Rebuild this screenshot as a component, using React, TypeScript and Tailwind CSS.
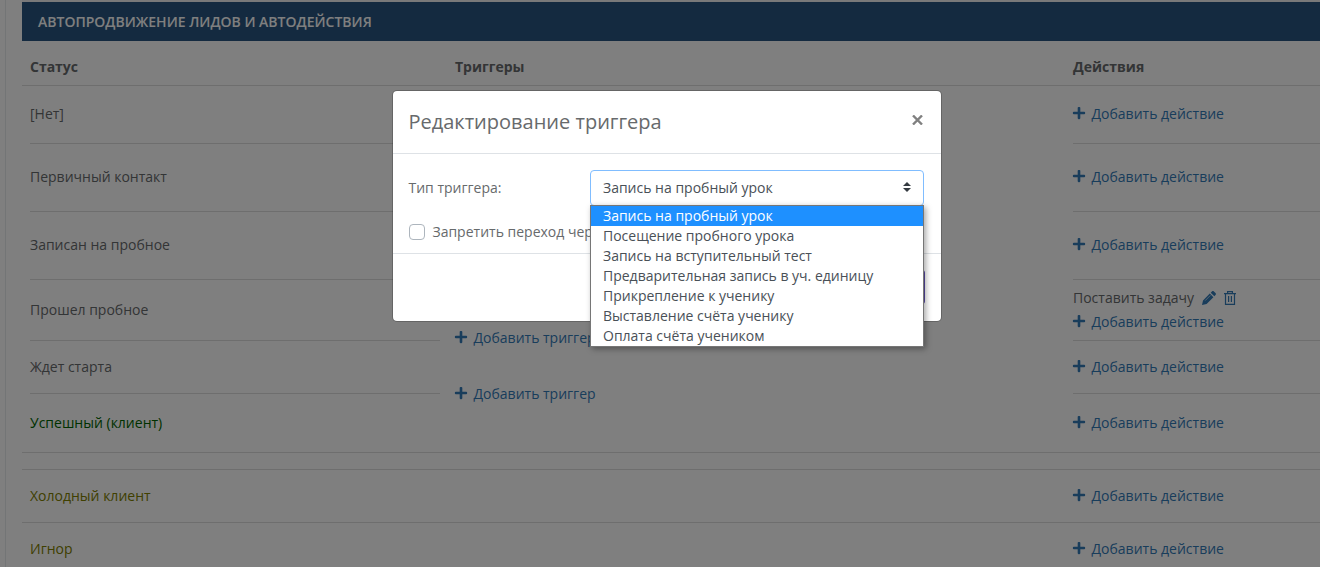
import { FaPlus } from 'react-icons/fa'

const options = [
  'Запись на пробный урок',
  'Посещение пробного урока',
  'Запись на вступительный тест',
  'Предварительная запись в уч. единицу',
  'Прикрепление к ученику',
  'Выставление счёта ученику',
  'Оплата счёта учеником',
]

const stages = [
  { name: '[Нет]', height: 'h-[58px] pb-[2px]', color: 'text-[#676a6c]' },
  { name: 'Первичный контакт', height: 'h-[68px] pb-[2px]', color: 'text-[#676a6c]' },
  { name: 'Записан на пробное', height: 'h-[68px] pb-[2px]', color: 'text-[#676a6c]' },
  { name: 'Прошел пробное', height: 'h-[61px]', color: 'text-[#676a6c]', task: 'Поставить задачу' },
  { name: 'Ждет старта', height: 'h-[53px]', color: 'text-[#676a6c]' },
  { name: 'Успешный (клиент)', height: 'h-[58px]', color: 'text-[#006400]' },
]

const otherStages = [
  { name: 'Холодный клиент', color: 'text-[#808000]' },
  { name: 'Игнор', color: 'text-[#808000]' },
]

function AddLink({ label }: { label: string }) {
  return (
    <a className="flex h-6 items-center whitespace-nowrap text-[#337ab7]">
      <FaPlus className="mr-[5.5px] -ml-px size-[14px] -translate-y-px" />
      {label}
    </a>
  )
}

function PencilIcon() {
  return (
    <svg viewBox="0 0 14 14" className="size-[14px]" fill="currentColor">
      <path d="M0 14 1 9.4 7.8 2.6l3.6 3.6L4.6 13zM8.7 1.7 9.9.5c.6-.6 1.4-.6 2 0l1.6 1.6c.6.6.6 1.4 0 2l-1.2 1.2z" />
      <path d="m3.2 9.6 5.2-5.2" stroke="#fff" strokeWidth=".6" />
    </svg>
  )
}

function TrashIcon() {
  return (
    <svg viewBox="0 0 12 14" className="h-[14px] w-3" fill="none" stroke="currentColor" strokeWidth="1.2">
      <path d="M0 2.6h12M3.6 2.4V.7h4.8v1.7M1.5 2.6v10.7h9V2.6M4.6 5v6M7.4 5v6" />
    </svg>
  )
}

function StageTable() {
  return (
    <div className="ml-[5px] h-full border-l border-[#e7eaec] pl-4">
      <div className="h-[2px] bg-[#f3f3f4]" />
      <h5 className="flex h-[39px] items-center bg-[#285480] pl-4 text-[14px] font-semibold text-white">
        АВТОПРОДВИЖЕНИЕ ЛИДОВ И АВТОДЕЙСТВИЯ
      </h5>
      <div className="flex h-[45px] items-center border-b border-[#dcdcdc] pt-[7px] pl-2 font-bold text-[#676a6c]">
        <div className="w-[425px]">Статус</div>
        <div className="w-[618px]">Триггеры</div>
        <div>Действия</div>
      </div>
      <div className="flex border-b border-[#dcdcdc] pl-2">
        <div className="mr-[15px] w-[410px]">
          {stages.map((stage) => (
            <div key={stage.name} className={`flex items-center border-b border-[#dcdcdc] last:border-b-0 ${stage.height} ${stage.color}`}>
              {stage.name}
            </div>
          ))}
        </div>
        <div className="flex w-[618px] flex-col gap-8 pt-[240px]">
          <AddLink label="Добавить триггер" />
          <AddLink label="Добавить триггер" />
        </div>
        <div className="flex-1">
          {stages.map((stage) => (
            <div key={stage.name} className={`flex flex-col justify-center border-b border-[#dcdcdc] last:border-b-0 ${stage.height}`}>
              {stage.task && (
                <div className="flex h-6 items-center text-[#676a6c]">
                  {stage.task}
                  <span className="ml-[7.5px] flex gap-2 text-[#337ab7]"><PencilIcon /><TrashIcon /></span>
                </div>
              )}
              <AddLink label="Добавить действие" />
            </div>
          ))}
        </div>
      </div>
      <div className="mt-4 border-t border-[#dcdcdc]">
        {otherStages.map((stage) => (
          <div key={stage.name} className="flex h-[53px] items-center border-b border-[#dcdcdc] pl-2">
            <div className={`w-[1043px] ${stage.color}`}>{stage.name}</div>
            <AddLink label="Добавить действие" />
          </div>
        ))}
      </div>
    </div>
  )
}

function TriggerSelect() {
  return (
    <div className="relative w-[334px]">
      <div className="flex h-9 items-center justify-between rounded border border-[#80bdff] bg-white pr-3 pl-3 text-[#495057]">
        {options[0]}
        <svg viewBox="0 0 8 10" className="h-[10px] w-2 -translate-y-px" fill="#343a40">
          <path d="M4 0 0 4h8zM4 10 0 6h8z" />
        </svg>
      </div>
      <ul className="absolute top-[35px] left-0 z-10 w-[334px] border border-[#767676] bg-white text-[#495057] shadow-[2px_2px_6px_rgba(0,0,0,0.35)]">
        {options.map((option) => (
          <li key={option} className="h-5 pl-3 leading-5 whitespace-nowrap first:bg-[#1e90ff] first:text-white">
            {option}
          </li>
        ))}
      </ul>
    </div>
  )
}

function TriggerModal() {
  return (
    <div className="h-[232px] w-[550px] rounded-[5px] border border-black/20 bg-white bg-clip-padding text-[#676a6c]">
      <div className="flex h-[63px] items-center justify-between border-b border-[#dee2e6] px-4">
        <h4 className="-ml-[0.5px] text-[20px]">Редактирование триггера</h4>
        <button aria-label="Закрыть" className="mr-[2px] -mt-[5px]">
          <svg viewBox="0 0 11 10" className="h-[10px] w-[11px]" stroke="#808080" strokeWidth="2.4">
            <path d="m1 .5 9 9M10 .5l-9 9" />
          </svg>
        </button>
      </div>
      <div className="h-[99px] px-4 pt-4">
        <div className="flex h-9 items-center">
          <label className="-ml-[0.5px] w-[181.5px]">Тип триггера:</label>
          <TriggerSelect />
        </div>
        <label className="mt-4 flex h-5 items-center">
          <span className="mr-[7.5px] size-4 rounded border border-[#adb5bd]" />
          Запретить переход через
        </label>
      </div>
      <div className="flex justify-end border-t border-[#dee2e6] pt-4 pr-4">
        <button aria-label="Сохранить" className="h-[34px] w-24 rounded-[3px] bg-[#5b4bab]" />
      </div>
    </div>
  )
}

export default function App() {
  return (
    <div className="relative h-[567px] w-[1320px] overflow-hidden bg-white font-['Open_Sans','Noto_Sans',sans-serif] text-[14px] leading-5">
      <StageTable />
      <div className="absolute inset-0 flex items-start bg-black/50 pt-[90px] pl-[392px]">
        <TriggerModal />
      </div>
    </div>
  )
}
